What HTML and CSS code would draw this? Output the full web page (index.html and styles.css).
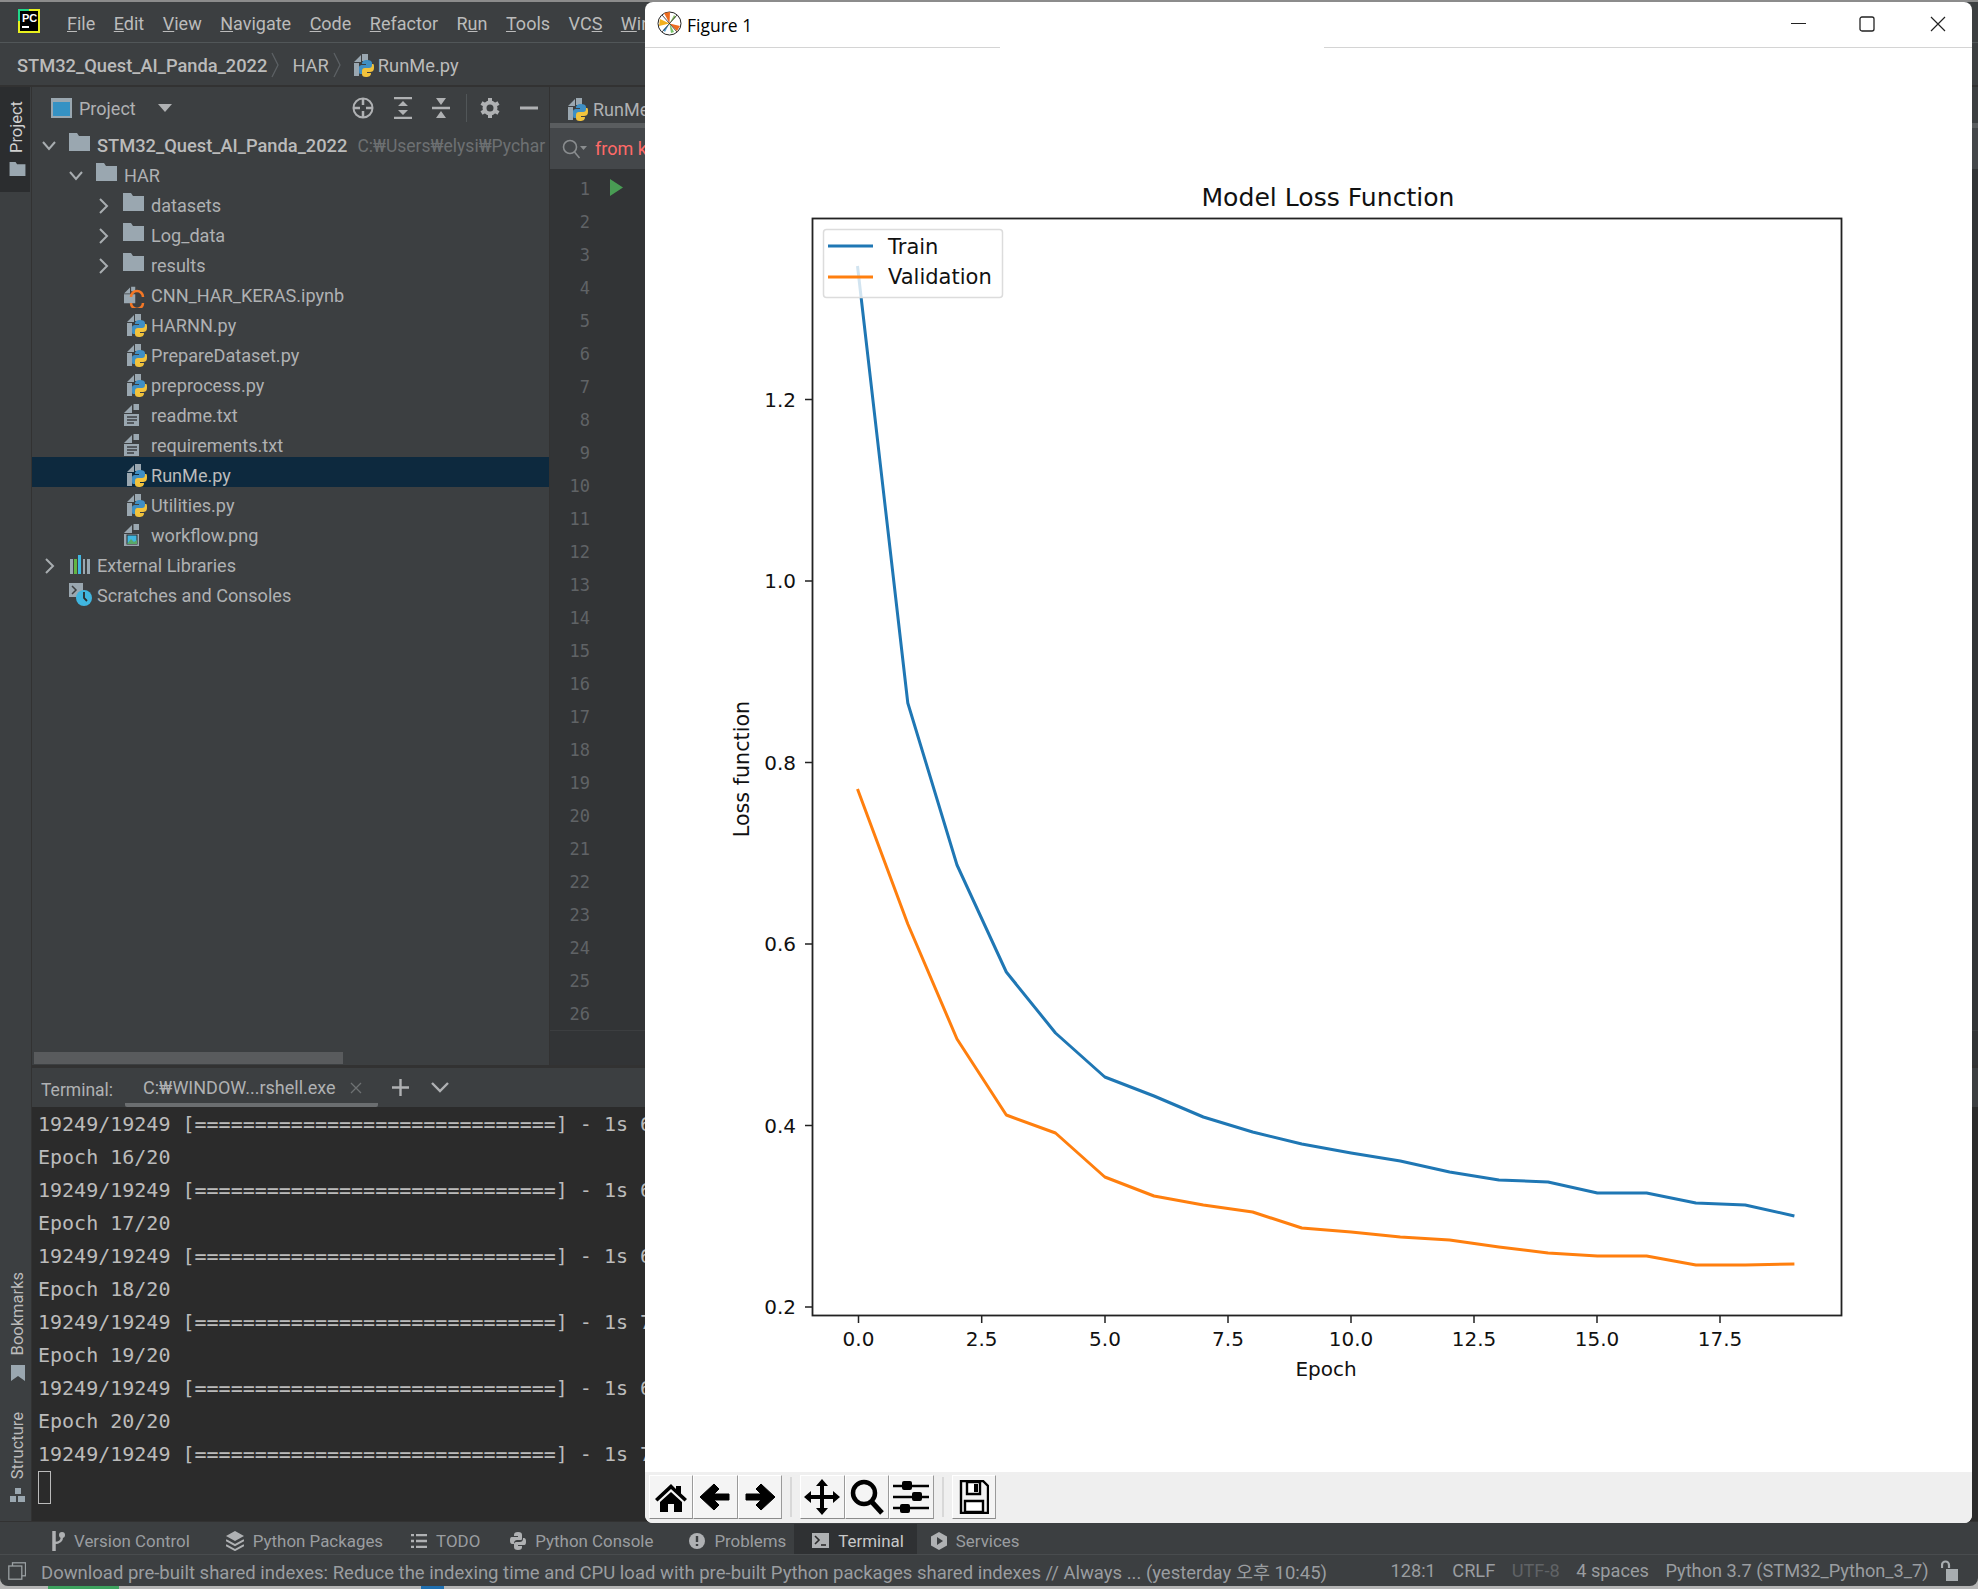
FILE: index.html
```html
<!DOCTYPE html>
<html lang="en">

<head>
  <meta charset="utf-8">
  <title>STM32_Quest_AI_Panda_2022 - RunMe.py</title>
  <link rel="stylesheet" href="styles.css">
</head>

<body>
  <svg class="defs">
    <defs>
      <symbol id="i-folder" viewBox="0 0 21 18">
        <path d="M0 0h8l2 3h11v15H0z" fill="#9aa7b0" />
      </symbol>
      <symbol id="i-file" viewBox="0 0 16 24">
        <path d="M0 10 8 2v8zM9.500 1H15v6H9.500z" fill="#9aa7b0" />
        <path d="M0 11h15v12H0z" fill="#9aa7b0" />
      </symbol>
      <symbol id="i-py" viewBox="0 0 21 25">
        <path d="M0 9 7 2v7zM8 1h6v7H8zM0 10h5v13H0z" fill="#9aa7b0" />
        <path d="M5 15c0-3 2-3 4-3h3v-1H8c0-3 2-4 5-4s5 1 5 3v4c0 2-2 3-3 3h-4c-2 0-3 1-3 3v1H6c-1 0-1-3-1-6z"
          fill="#3f8fc4" />
        <path d="M20 15c0 3-2 4-4 4h-3v1h4c0 3-2 4-5 4s-4-1-4-3v-3c0-2 1-3 3-3h4c2 0 3-1 3-3v-1h1c1 0 1 2 1 4z"
          fill="#f2c33c" />
      </symbol>
      <symbol id="i-right" viewBox="0 0 14 18">
        <path d="M4 2l7 7-7 7" fill="none" stroke="#a8adb0" stroke-width="2" />
      </symbol>
      <symbol id="i-down" viewBox="0 0 14 18">
        <path d="M1 5l6 7 6-7" fill="none" stroke="#a8adb0" stroke-width="2" />
      </symbol>
    </defs>
  </svg>

  <div class="ide">
    <!-- menu -->
    <header class="menubar">
      <svg class="pc-logo" width="22" height="24" viewBox="0 0 22 24">
        <rect width="22" height="24" fill="#e9f01e" />
        <rect x="0" y="0" width="11" height="12" fill="#21d789" />
        <rect x="2" y="2" width="18" height="20" fill="#000" />
        <rect x="4" y="17" width="7" height="2" fill="#fff" />
        <text x="4" y="13" class="pc-text">PC</text>
      </svg>
      <nav class="menu">
        <span><u>F</u>ile</span>
        <span><u>E</u>dit</span>
        <span><u>V</u>iew</span>
        <span><u>N</u>avigate</span>
        <span><u>C</u>ode</span>
        <span><u>R</u>efactor</span>
        <span>R<u>u</u>n</span>
        <span><u>T</u>ools</span>
        <span>VC<u>S</u></span>
        <span><u>W</u>indow</span>
      </nav>
    </header>

    <div class="crumbs">
      <b>STM32_Quest_AI_Panda_2022</b>
      <svg class="sep" width="9" height="26" viewBox="0 0 9 26">
        <path d="M1 1l6 12-6 12" fill="none" stroke="#5c6164" stroke-width="1.300" />
      </svg>
      <span>HAR</span>
      <svg class="sep" width="9" height="26" viewBox="0 0 9 26">
        <path d="M1 1l6 12-6 12" fill="none" stroke="#5c6164" stroke-width="1.300" />
      </svg>
      <svg class="crumb-icon" width="21" height="25">
        <use href="#i-py" />
      </svg>
      <span>RunMe.py</span>
    </div>

    <div class="workspace">
      <!-- left strip -->
      <aside class="strip">
        <div class="strip-btn active">
          <span class="vtext">Project</span>
          <svg width="17" height="14" viewBox="0 0 21 18">
            <use href="#i-folder" />
          </svg>
        </div>
        <div class="strip-btn bookmarks">
          <span class="vtext">Bookmarks</span>
          <svg width="14" height="16" viewBox="0 0 14 16">
            <path d="M0 0h14v16l-7-5-7 5z" fill="#9aa7b0" />
          </svg>
        </div>
        <div class="strip-btn structure">
          <span class="vtext">Structure</span>
          <svg width="15" height="14" viewBox="0 0 15 14">
            <path d="M5 0h6v6H5zM0 8h6v6H0zM8 8h7v6H8z" fill="#9aa7b0" />
          </svg>
        </div>
      </aside>

      <div class="center">
        <div class="upper">
          <!-- project tree -->
          <section class="project">
            <div class="project-bar">
              <svg class="pane-icon" width="21" height="20" viewBox="0 0 21 20">
                <rect x="1" y="1" width="19" height="18" fill="#3592c4" stroke="#9aa7b0" stroke-width="2" />
                <rect x="0" y="0" width="21" height="4" fill="#9aa7b0" />
              </svg>
              <span class="pane-title">Project</span>
              <svg class="caret" width="14" height="8" viewBox="0 0 14 8">
                <path d="M0 0h14L7 8z" fill="#afb1b3" />
              </svg>
              <svg class="tool first" width="22" height="22" viewBox="0 0 22 22">
                <circle cx="11" cy="11" r="9.500" fill="none" stroke="#afb1b3" stroke-width="2" />
                <path d="M11 1v7M11 14v7M1 11h7M14 11h7" stroke="#afb1b3" stroke-width="2.500" />
              </svg>
              <svg class="tool" width="18" height="22" viewBox="0 0 18 22">
                <path d="M0 1h18M0 21h18" stroke="#afb1b3" stroke-width="2.500" />
                <path d="M9 4l5 5H4zM9 18l5-5H4z" fill="#afb1b3" />
              </svg>
              <svg class="tool" width="18" height="22" viewBox="0 0 18 22">
                <path d="M0 11h18" stroke="#afb1b3" stroke-width="2.500" />
                <path d="M9 8L4 1h10zM9 14l5 7H4z" fill="#afb1b3" />
              </svg>
              <i class="tool-sep"></i>
              <svg class="tool" width="20" height="22" viewBox="0 0 20 22">
                <circle cx="10" cy="11" r="5.500" fill="none" stroke="#afb1b3" stroke-width="4" />
                <path d="M10 1v4M10 17v4M1.500 6l3.500 2M15 14l3.500 2M1.500 16L5 14M15 8l3.500-2" stroke="#afb1b3"
                  stroke-width="4" />
              </svg>
              <svg class="tool" width="18" height="22" viewBox="0 0 18 22">
                <path d="M0 11h18" stroke="#afb1b3" stroke-width="3" />
              </svg>
            </div>

            <div class="tree">
              <div class="row d0">
                <svg class="chev"><use href="#i-down" /></svg>
                <svg class="ico"><use href="#i-folder" width="21" height="18" /></svg>
                <b>STM32_Quest_AI_Panda_2022</b>
                <span class="path">C:₩Users₩elysi₩Pychar</span>
              </div>
              <div class="row d1">
                <svg class="chev"><use href="#i-down" /></svg>
                <svg class="ico"><use href="#i-folder" width="21" height="18" /></svg>
                <span>HAR</span>
              </div>
              <div class="row d2">
                <svg class="chev"><use href="#i-right" /></svg>
                <svg class="ico"><use href="#i-folder" width="21" height="18" /></svg>
                <span>datasets</span>
              </div>
              <div class="row d2">
                <svg class="chev"><use href="#i-right" /></svg>
                <svg class="ico"><use href="#i-folder" width="21" height="18" /></svg>
                <span>Log_data</span>
              </div>
              <div class="row d2">
                <svg class="chev"><use href="#i-right" /></svg>
                <svg class="ico"><use href="#i-folder" width="21" height="18" /></svg>
                <span>results</span>
              </div>
              <div class="row d2">
                <i class="chev"></i>
                <svg class="ico file" viewBox="0 0 21 25" preserveAspectRatio="xMinYMid">
                  <use href="#i-file" width="12" height="24" />
                  <path d="M7 14a6 6 0 0 1 12 0M7 20a6 6 0 0 0 12 0" fill="none" stroke="#f37726" stroke-width="2.500" />
                </svg>
                <span>CNN_HAR_KERAS.ipynb</span>
              </div>
              <div class="row d2">
                <i class="chev"></i>
                <svg class="ico file"><use href="#i-py" /></svg>
                <span>HARNN.py</span>
              </div>
              <div class="row d2">
                <i class="chev"></i>
                <svg class="ico file"><use href="#i-py" /></svg>
                <span>PrepareDataset.py</span>
              </div>
              <div class="row d2">
                <i class="chev"></i>
                <svg class="ico file"><use href="#i-py" /></svg>
                <span>preprocess.py</span>
              </div>
              <div class="row d2">
                <i class="chev"></i>
                <svg class="ico file" viewBox="0 0 21 25" preserveAspectRatio="xMinYMid">
                  <use href="#i-file" width="16" height="24" />
                  <path d="M3 14h10M3 17h10M3 20h7" stroke="#3c3f41" stroke-width="1.300" />
                </svg>
                <span>readme.txt</span>
              </div>
              <div class="row d2">
                <i class="chev"></i>
                <svg class="ico file" viewBox="0 0 21 25" preserveAspectRatio="xMinYMid">
                  <use href="#i-file" width="16" height="24" />
                  <path d="M3 14h10M3 17h10M3 20h7" stroke="#3c3f41" stroke-width="1.300" />
                </svg>
                <span>requirements.txt</span>
              </div>
              <div class="row d2 selected">
                <i class="chev"></i>
                <svg class="ico file"><use href="#i-py" /></svg>
                <span>RunMe.py</span>
              </div>
              <div class="row d2">
                <i class="chev"></i>
                <svg class="ico file"><use href="#i-py" /></svg>
                <span>Utilities.py</span>
              </div>
              <div class="row d2">
                <i class="chev"></i>
                <svg class="ico file" viewBox="0 0 21 25" preserveAspectRatio="xMinYMid">
                  <use href="#i-file" width="16" height="24" />
                  <rect x="3" y="12" width="10" height="9" fill="#40b6e0" stroke="#2b2b2b" />
                  <path d="M3 21l4-5 3 3 3-2v4z" fill="#59a869" />
                </svg>
                <span>workflow.png</span>
              </div>
              <div class="row d0">
                <svg class="chev"><use href="#i-right" /></svg>
                <svg class="ico lib" viewBox="0 0 21 25" preserveAspectRatio="xMinYMid">
                  <path d="M1 6h3v15H1zM14 6h2v15h-2zM18 6h3v15h-3z" fill="#9aa7b0" />
                  <path d="M5 6h3v15H5z" fill="#62b543" />
                  <path d="M9 2h3v19H9z" fill="#40b6e0" />
                </svg>
                <span>External Libraries</span>
              </div>
              <div class="row d0">
                <i class="chev"></i>
                <svg class="ico" viewBox="0 0 23 25" preserveAspectRatio="xMinYMid">
                  <path d="M0 0h14v14H0z" fill="#9aa7b0" />
                  <path d="M3 3l4 4-4 4" fill="none" stroke="#3c3f41" stroke-width="1.500" />
                  <circle cx="15" cy="15" r="8" fill="#40b6e0" />
                  <path d="M15 9v6l3 3" fill="none" stroke="#2b2b2b" stroke-width="1.800" />
                </svg>
                <span>Scratches and Consoles</span>
              </div>
            </div>

            <div class="hscroll"><i></i></div>
          </section>

          <!-- editor, mostly behind the figure -->
          <section class="editor">
            <div class="editor-tab">
              <svg width="21" height="25"><use href="#i-py" /></svg>
              <span>RunMe.py</span>
            </div>
            <div class="find">
              <svg width="26" height="22" viewBox="0 0 26 22">
                <circle cx="9" cy="9" r="6.500" fill="none" stroke="#8a8d8f" stroke-width="1.600" />
                <path d="M13.500 14l5 6" stroke="#8a8d8f" stroke-width="1.600" />
                <path d="M19 8h7l-3.500 4z" fill="#8a8d8f" />
              </svg>
              <span>from keras</span>
            </div>
            <div class="gutter">
              <div class="lines">
                <div class="ln">1
                  <svg class="run" width="13" height="17" viewBox="0 0 13 17">
                    <path d="M0 0l13 8.500L0 17z" fill="#499c54" />
                  </svg>
                </div>
                <div class="ln">2</div>
                <div class="ln">3</div>
                <div class="ln">4</div>
                <div class="ln">5</div>
                <div class="ln">6</div>
                <div class="ln">7</div>
                <div class="ln">8</div>
                <div class="ln">9</div>
                <div class="ln">10</div>
                <div class="ln">11</div>
                <div class="ln">12</div>
                <div class="ln">13</div>
                <div class="ln">14</div>
                <div class="ln">15</div>
                <div class="ln">16</div>
                <div class="ln">17</div>
                <div class="ln">18</div>
                <div class="ln">19</div>
                <div class="ln">20</div>
                <div class="ln">21</div>
                <div class="ln">22</div>
                <div class="ln">23</div>
                <div class="ln">24</div>
                <div class="ln">25</div>
                <div class="ln">26</div>
              </div>
            </div>
          </section>
        </div>

        <!-- terminal -->
        <section class="terminal">
          <div class="term-head">
            <span class="term-label">Terminal:</span>
            <div class="term-tab">
              <span>C:₩WINDOW...rshell.exe</span>
              <svg width="12" height="12" viewBox="0 0 12 12">
                <path d="M1 1l10 10M11 1L1 11" stroke="#6e7173" stroke-width="1.300" />
              </svg>
            </div>
            <svg class="term-add" width="17" height="17" viewBox="0 0 17 17">
              <path d="M8.500 0v17M0 8.500h17" stroke="#afb1b3" stroke-width="2.400" />
            </svg>
            <svg class="term-more" width="18" height="11" viewBox="0 0 18 11">
              <path d="M1 1l8 8 8-8" fill="none" stroke="#afb1b3" stroke-width="2.400" />
            </svg>
          </div>
          <div class="term-body">
            <div>19249/19249 [==============================] - 1s 66us/step</div>
            <div>Epoch 16/20</div>
            <div>19249/19249 [==============================] - 1s 66us/step</div>
            <div>Epoch 17/20</div>
            <div>19249/19249 [==============================] - 1s 66us/step</div>
            <div>Epoch 18/20</div>
            <div>19249/19249 [==============================] - 1s 71us/step</div>
            <div>Epoch 19/20</div>
            <div>19249/19249 [==============================] - 1s 66us/step</div>
            <div>Epoch 20/20</div>
            <div>19249/19249 [==============================] - 1s 71us/step</div>
            <i class="cursor"></i>
          </div>
        </section>
      </div>
    </div>

    <!-- bottom tool tabs -->
    <footer class="toolbar">
      <span class="tw vc">
        <svg width="14" height="20" viewBox="0 0 14 20">
          <path d="M3 0v20" stroke="#afb1b3" stroke-width="3.500" />
          <path d="M3 12c6 0 8-2 8-7" fill="none" stroke="#afb1b3" stroke-width="2.500" />
          <circle cx="11" cy="4" r="3" fill="#afb1b3" />
        </svg>
        Version Control
      </span>
      <span class="tw packages">
        <svg width="18" height="20" viewBox="0 0 18 20">
          <path d="M9 0l9 5-9 5-9-5z" fill="#afb1b3" />
          <path d="M0 9l9 5 9-5M0 14l9 5 9-5" fill="none" stroke="#afb1b3" stroke-width="2" />
        </svg>
        Python Packages
      </span>
      <span class="tw todo">
        <svg width="16" height="14" viewBox="0 0 16 14">
          <path d="M0 1h3M5 1h11M0 7h3M5 7h11M0 13h3M5 13h11" stroke="#afb1b3" stroke-width="2.400" />
        </svg>
        TODO
      </span>
      <span class="tw">
        <svg width="16" height="18" viewBox="0 0 16 18">
          <path d="M8 0c-3 0-4 1-4 3v1h4v1H2C0 5 0 7 0 9s1 3 2 3h2c0-3 1-4 4-4h3c1 0 1-1 1-2V3c0-2-1-3-4-3z"
            fill="#afb1b3" />
          <path d="M8 18c3 0 4-1 4-3v-1H8v-1h6c2 0 2-2 2-4s-1-3-2-3h-1c0 3-1 4-4 4H6c-1 0-2 1-2 2v3c0 2 1 3 4 3z"
            fill="#afb1b3" />
        </svg>
        Python Console
      </span>
      <span class="tw problems">
        <svg width="16" height="16" viewBox="0 0 16 16">
          <circle cx="8" cy="8" r="8" fill="#afb1b3" />
          <path d="M8 3v6M8 11v2" stroke="#3c3f41" stroke-width="2.400" />
        </svg>
        Problems
      </span>
      <span class="tw active">
        <svg width="17" height="15" viewBox="0 0 17 15">
          <rect width="17" height="15" fill="#afb1b3" />
          <path d="M3 3l4 4-4 4" fill="none" stroke="#2b2b2b" stroke-width="1.600" />
          <path d="M9 12h5" stroke="#2b2b2b" stroke-width="1.600" />
        </svg>
        Terminal
      </span>
      <span class="tw last">
        <svg width="16" height="18" viewBox="0 0 16 18">
          <path d="M8 0l8 4.500v9L8 18l-8-4.500v-9z" fill="#afb1b3" />
          <path d="M6 5l6 4-6 4z" fill="#3c3f41" />
        </svg>
        Services
      </span>
    </footer>

    <div class="statusbar">
      <svg class="status-icon" width="18" height="18" viewBox="0 0 18 18">
        <rect x="4.500" y="0.800" width="13" height="13" fill="none" stroke="#9aa0a3" stroke-width="1.300" />
        <rect x="0.800" y="4" width="13" height="13.200" fill="#3c3f41" stroke="#9aa0a3" stroke-width="1.300" />
      </svg>
      <span class="status-msg">Download pre-built shared indexes: Reduce the indexing time and CPU load with pre-built Python packages shared indexes // Always ... (yesterday 오후 10:45)</span>
      <span>128:1</span>
      <span>CRLF</span>
      <span class="dim">UTF-8</span>
      <span>4 spaces</span>
      <span>Python 3.7 (STM32_Python_3_7)</span>
      <svg class="lock" width="17" height="21" viewBox="0 0 17 21">
        <path d="M1 8V5a3.500 3.500 0 0 1 7 0v3" fill="none" stroke="#a8adb0" stroke-width="2.200" />
        <rect x="5" y="9" width="12" height="12" fill="#a8adb0" />
      </svg>
    </div>
    <div class="under">
      <i class="under-a"></i>
      <i class="under-b"></i>
    </div>
  </div>

  <!-- matplotlib window, floating over the IDE -->
  <div class="figure">
    <div class="fig-title">
      <svg class="fig-logo" width="25" height="25" viewBox="0 0 25 25">
        <circle cx="12.500" cy="12.500" r="11.500" fill="#fff" stroke="#222" stroke-width="1" />
        <path d="M12.500 12.500L7 2l6-1z" fill="#ee6c1f" />
        <path d="M12.500 12.500L3 8l-1 7z" fill="#f2b01e" />
        <path d="M12.500 12.500L20 20l3-5z" fill="#ee6c1f" />
        <path d="M12.500 12.500L14 22l3-1z" fill="#79c36a" />
        <path d="M12.500 12.500L19 6l-2-2z" fill="#8fc36a" />
        <path d="M12.500 12.500L6 19l2 2z" fill="#4c9bd0" />
        <path d="M5 4l15 17M20 4L5 21" stroke="#222" stroke-width="0.800" />
      </svg>
      <span class="fig-name">Figure 1</span>
      <svg class="win-btn min" width="16" height="16" viewBox="0 0 16 16">
        <path d="M0 7.500h15" stroke="#222" stroke-width="1.200" />
      </svg>
      <svg class="win-btn max" width="16" height="16" viewBox="0 0 16 16">
        <rect x="1" y="1" width="14" height="14" rx="2" fill="none" stroke="#222" stroke-width="1.300" />
      </svg>
      <svg class="win-btn" width="16" height="16" viewBox="0 0 16 16">
        <path d="M1 1l14 14M15 1L1 15" stroke="#222" stroke-width="1.200" />
      </svg>
    </div>
    <div class="fig-rule"><i></i></div>

    <svg class="plot" width="1327" height="1424" viewBox="645 48 1327 1424">
      <text x="1328" y="206" class="t-title" text-anchor="middle">Model Loss Function</text>

      <polyline class="train" points="857.500,266 907.800,703 957,865 1006.300,972 1055.500,1033 1104.800,1077 1154,1096 1203.300,1117 1252.600,1132 1301.800,1144 1351.100,1153 1400.300,1161 1449.600,1172 1498.900,1180 1548.100,1182 1597.400,1193 1646.600,1193 1695.900,1203 1745.200,1205 1794.400,1216" />
      <polyline class="val" points="857.500,789 907.800,924 957,1039 1006.300,1115 1055.500,1133 1104.800,1177 1154,1196 1203.300,1205 1252.600,1212 1301.800,1228 1351.100,1232 1400.300,1237 1449.600,1240 1498.900,1247 1548.100,1253 1597.400,1256 1646.600,1256 1695.900,1265 1745.200,1265 1794.400,1264" />

      <rect class="axes" x="812.500" y="218.500" width="1029" height="1097" />

      <path class="ticks" d="M858.500 1316v7M981.700 1316v7M1105 1316v7M1228 1316v7M1351 1316v7M1474 1316v7M1597 1316v7M1720 1316v7M812 1307h-7M812 1125.500h-7M812 944h-7M812 762.500h-7M812 581h-7M812 399.500h-7" />

      <g class="t-tick" text-anchor="middle">
        <text x="858.500" y="1346">0.0</text>
        <text x="981.700" y="1346">2.5</text>
        <text x="1105" y="1346">5.0</text>
        <text x="1228" y="1346">7.5</text>
        <text x="1351" y="1346">10.0</text>
        <text x="1474" y="1346">12.5</text>
        <text x="1597" y="1346">15.0</text>
        <text x="1720" y="1346">17.5</text>
      </g>
      <g class="t-tick" text-anchor="end">
        <text x="796" y="1314">0.2</text>
        <text x="796" y="1133">0.4</text>
        <text x="796" y="951">0.6</text>
        <text x="796" y="770">0.8</text>
        <text x="796" y="588">1.0</text>
        <text x="796" y="407">1.2</text>
      </g>
      <text class="t-tick" x="1326" y="1376" text-anchor="middle">Epoch</text>
      <text class="t-label" x="749" y="769" text-anchor="middle" transform="rotate(-90 749 769)">Loss function</text>

      <rect class="legend" x="823.500" y="229.500" width="179" height="68" rx="3" />
      <path class="train" d="M828 246h45" />
      <path class="val" d="M828 277h45" />
      <text class="t-legend" x="888" y="254">Train</text>
      <text class="t-legend" x="888" y="284">Validation</text>
    </svg>

    <div class="fig-tools">
      <button class="nav-btn">
        <svg width="34" height="30" viewBox="0 0 34 30">
          <path d="M17 2L1 17l2.500 2.500L17 7l13.500 12.500L33 17l-6-5.500V4h-5v3z" fill="#000" />
          <path d="M6 20L17 10l11 10v10h-8v-8h-6v8H6z" fill="#000" />
        </svg>
      </button>
      <button class="nav-btn">
        <svg width="32" height="30" viewBox="0 0 32 30">
          <path d="M15 2l5 5-5 5h15v6H15l5 5-5 5L1 15z" fill="#000" stroke="#000" stroke-linejoin="round" />
        </svg>
      </button>
      <button class="nav-btn">
        <svg width="32" height="30" viewBox="0 0 32 30">
          <path d="M17 2l-5 5 5 5H2v6h15l-5 5 5 5 14-13z" fill="#000" stroke="#000" stroke-linejoin="round" />
        </svg>
      </button>
      <i class="nav-sep"></i>
      <button class="nav-btn">
        <svg width="36" height="36" viewBox="0 0 36 36">
          <path d="M18 0l6 7h-4v9h9v-4l7 6-7 6v-4h-9v9h4l-6 7-6-7h4v-9H7v4l-7-6 7-6v4h9V7h-4z" fill="#000" />
        </svg>
      </button>
      <button class="nav-btn">
        <svg width="34" height="36" viewBox="0 0 34 36">
          <circle cx="14" cy="14" r="11" fill="none" stroke="#000" stroke-width="4.500" />
          <path d="M21 22l11 12" stroke="#000" stroke-width="5" />
        </svg>
      </button>
      <button class="nav-btn">
        <svg width="36" height="34" viewBox="0 0 36 34">
          <path d="M0 6h36M0 17h36M0 28h36" stroke="#000" stroke-width="2.500" />
          <rect x="9" y="1" width="10" height="9" rx="2" fill="#000" />
          <rect x="19" y="12" width="10" height="9" rx="2" fill="#000" />
          <rect x="7" y="24" width="10" height="9" rx="2" fill="#000" />
        </svg>
      </button>
      <i class="nav-sep"></i>
      <button class="nav-btn">
        <svg width="30" height="34" viewBox="0 0 30 34">
          <path d="M2 1h22l5 5v27H2z" fill="none" stroke="#000" stroke-width="2.400" />
          <path d="M8 2v12h13V2zM6 21h18v11H6z" fill="#fff" stroke="#000" stroke-width="2.400" />
          <path d="M15 4h4v8h-4z" fill="#000" />
        </svg>
      </button>
    </div>
  </div>
</body>

</html>
```

FILE: styles.css
```css
* {
  box-sizing: border-box;
}

html,
body {
  margin: 0;
  padding: 0;
  height: 100%;
  overflow: hidden;
  background: #fff;
}

body {
  width: 1980px;
  height: 1589px;
  position: relative;
  font-family: Roboto, "Noto Sans CJK KR", sans-serif;
  font-size: 18px;
  color: #afb1b3;
}

.defs {
  position: absolute;
  width: 0;
  height: 0;
}

svg {
  display: block;
  flex: none;
}

.ide {
  width: 1978px;
  height: 1589px;
  display: flex;
  flex-direction: column;
  background: #b5b5b5;
  border-top: 2px solid #8c8c8c;
}

/* menu and breadcrumb */
.menubar {
  height: 41px;
  flex: none;
  display: flex;
  align-items: center;
  padding-left: 18px;
  background: #3c3f41;
  border-bottom: 1px solid #515658;
}

.pc-logo {
  margin-top: -3px;
}

.pc-text {
  font: bold 11px "Liberation Sans", sans-serif;
  fill: #fff;
}

.menu {
  display: flex;
  gap: 18.500px;
  margin-left: 27px;
  padding-top: 2px;
  color: #bbbbbb;
  font-size: 18px;
  white-space: nowrap;
}

.crumbs {
  height: 44px;
  flex: none;
  display: flex;
  align-items: center;
  padding: 2px 0 0 17px;
  background: #3c3f41;
  color: #bbbbbb;
  font-size: 18.300px;
  border-bottom: 2px solid #323232;
}

.crumbs .sep {
  margin: 0 12px 0 4px;
}

.crumbs .crumb-icon {
  margin: 0 3px 0 0;
}

.crumbs b {
  font-weight: 500;
}

.workspace {
  flex: 1;
  min-height: 0;
  display: flex;
  background: #3c3f41;
}

/* left strip */
.strip {
  width: 32px;
  flex: none;
  display: flex;
  flex-direction: column;
  border-right: 1px solid #323232;
}

.strip-btn {
  display: flex;
  flex-direction: column;
  align-items: center;
  gap: 9px;
  padding: 14px 0 16px 4px;
  color: #bbbbbb;
  font-size: 16.500px;
}

.strip-btn.active {
  background: #2b2d2f;
  width: 30px;
  color: #d0d0d0;
}

.strip-btn.bookmarks {
  margin-top: auto;
  padding-bottom: 17px;
}

.strip-btn.structure {
  padding-bottom: 19px;
}

.vtext {
  writing-mode: vertical-rl;
  transform: rotate(180deg);
  line-height: 18px;
}

.center {
  flex: 1;
  min-width: 0;
  display: flex;
  flex-direction: column;
}

.upper {
  height: 978px;
  flex: none;
  display: flex;
}

/* project tree */
.project {
  width: 517px;
  flex: none;
  display: flex;
  flex-direction: column;
}

.project-bar {
  height: 40px;
  flex: none;
  display: flex;
  align-items: center;
  padding: 2px 0 0 19px;
}

.pane-title {
  margin-left: 7px;
}

.caret {
  margin-left: 22px;
}

.tool {
  margin-left: 20px;
}

.tool.first {
  margin-left: 180.500px;
}

.tool-sep {
  width: 1px;
  height: 28px;
  margin: 0 -7px 0 16px;
  background: #515658;
}

.tree {
  flex: 1;
  min-height: 0;
  overflow: hidden;
  font-size: 18.100px;
}

.row {
  height: 30px;
  display: flex;
  align-items: center;
  padding-top: 7px;
  white-space: nowrap;
}

.row.d0 {
  padding-left: 10px;
}

.row.d1 {
  padding-left: 37px;
}

.row.d2 {
  padding-left: 64px;
}

.row.selected {
  background: #0d293e;
  color: #bbbbbb;
}

.row b {
  font-weight: 500;
  font-size: 18.300px;
  color: #bbbbbb;
}

.chev {
  width: 14px;
  height: 18px;
  margin-right: 13px;
  flex: none;
  display: block;
}

.ico {
  width: 28px;
  height: 25px;
  flex: none;
}

.ico.file {
  margin-left: 1px;
  width: 27px;
  height: 25px;
}

.path {
  margin-left: 10px;
  font-size: 17.500px;
  color: #6d7072;
}

.hscroll {
  height: 14px;
  flex: none;
  padding: 1px 0 0 2px;
}

.hscroll i {
  display: block;
  width: 309px;
  height: 12px;
  background: #595b5d;
}

/* editor */
.editor {
  flex: 1;
  min-width: 0;
  overflow: hidden;
  display: flex;
  flex-direction: column;
  border-left: 1px solid #323232;
}

.editor-tab {
  height: 41px;
  flex: none;
  display: flex;
  align-items: center;
  gap: 4px;
  padding: 8px 0 0 18px;
  white-space: nowrap;
  border-bottom: 5px solid #5a5d5f;
}

.find {
  height: 41px;
  flex: none;
  display: flex;
  align-items: center;
  gap: 8px;
  padding-left: 11px;
  color: #ff6a68;
  background: #44474a;
  white-space: nowrap;
}

.gutter {
  flex: 1;
  min-height: 0;
  overflow: hidden;
  background: #323436;
  font: 17px "DejaVu Sans Mono", monospace;
  color: #606366;
  padding-top: 3px;
}

.lines {
  border-bottom: 1px solid #3c3e40;
}

.ln {
  height: 33px;
  width: 40px;
  display: flex;
  align-items: center;
  justify-content: flex-end;
  position: relative;
}

.run {
  position: absolute;
  left: 60px;
  top: 7px;
}

/* terminal */
.terminal {
  flex: 1;
  min-height: 0;
  display: flex;
  flex-direction: column;
  border-top: 3px solid #323232;
}

.term-head {
  height: 39px;
  flex: none;
  display: flex;
  align-items: center;
  padding-left: 9px;
  white-space: nowrap;
}

.term-label {
  width: 84px;
  padding-top: 4px;
  font-size: 17.500px;
}

.term-tab {
  height: 39px;
  width: 253px;
  flex: none;
  display: flex;
  align-items: center;
  gap: 14px;
  padding: 4px 0 0 18px;
  border-bottom: 4px solid #6b6e70;
  border-radius: 0 0 2px 2px;
}

.term-add {
  margin-left: 14px;
}

.term-more {
  margin-left: 22px;
}

.term-body {
  flex: 1;
  min-height: 0;
  overflow: hidden;
  background: #2b2b2b;
  padding: 1px 0 0 6px;
  font: 20px/33px "DejaVu Sans Mono", monospace;
  color: #bbbbbb;
  white-space: nowrap;
}

.cursor {
  display: block;
  width: 13px;
  height: 33px;
  border: 1px solid #bbbbbb;
}

/* bottom tool tabs */
.toolbar {
  height: 34px;
  flex: none;
  display: flex;
  align-items: stretch;
  padding-left: 33px;
  background: #3c3f41;
  font-size: 16.900px;
  color: #9a9da0;
  border-top: 1px solid #323232;
  border-bottom: 1px solid #494c4e;
}

.tw {
  display: flex;
  align-items: center;
  gap: 9px;
  padding: 3px 18px 0;
  margin-top: 2px;
  white-space: nowrap;
}

.tw.packages {
  padding-right: 10px;
}

.tw.todo {
  padding-right: 12px;
}

.tw.problems {
  padding-right: 8px;
}

.tw.active {
  background: #2f3133;
  color: #c8c8c8;
  padding: 3px 13px 0 18px;
}

.tw.last {
  padding-left: 14px;
}

/* status bar */
.statusbar {
  height: 31px;
  flex: none;
  display: flex;
  align-items: center;
  gap: 16.500px;
  padding: 0 20px 0 8px;
  background: #3c3f41;
  border-radius: 0 0 8px 8px;
  color: #9a9da0;
  font-size: 18.200px;
  white-space: nowrap;
}

.status-msg {
  margin: 0 auto 0 -1.500px;
  font-size: 18.500px;
}

.lock {
  margin-left: -4px;
}

.dim {
  color: #606366;
}

.under {
  height: 3px;
  flex: none;
  display: flex;
  padding-left: 48px;
}

.under-a {
  width: 71px;
  background: #3ea35f;
}

.under-b {
  width: 23px;
  margin-left: 302px;
  background: #1f6fb0;
}

/* figure window */
.figure {
  position: absolute;
  left: 645px;
  top: 2px;
  width: 1327px;
  height: 1521px;
  display: flex;
  flex-direction: column;
  background: #fff;
  border-radius: 8px;
  overflow: hidden;
  font-family: "Open Sans", sans-serif;
  color: #000;
}

.fig-title {
  height: 45px;
  flex: none;
  display: flex;
  align-items: center;
  padding: 0 26px 2px 12px;
  font-size: 17.500px;
}

.fig-logo {
  margin-right: 5px;
}

.fig-name {
  margin-top: 3px;
}

.win-btn {
  margin-left: 55px;
}

.win-btn.min {
  margin-left: auto;
}

.win-btn.max {
  margin-left: 52.500px;
}

.fig-rule {
  height: 1px;
  flex: none;
  background: #d4d4d4;
}

.fig-rule i {
  display: block;
  width: 324px;
  height: 1px;
  margin-left: 355px;
  background: #fff;
}

.plot {
  flex: none;
}

.plot polyline,
.plot path.train,
.plot path.val {
  fill: none;
  stroke-width: 3px;
  stroke-linejoin: round;
}

.train {
  stroke: #1f77b4;
}

.val {
  stroke: #ff7f0e;
}

.axes {
  fill: none;
  stroke: #222;
  stroke-width: 1.800px;
}

.ticks {
  stroke: #222;
  stroke-width: 1.500px;
  fill: none;
}

.legend {
  fill: #fff;
  fill-opacity: 0.8;
  stroke: #dcdcdc;
  stroke-width: 1.500px;
}

.t-title {
  font: 25.100px "DejaVu Sans", sans-serif;
  fill: #111;
}

.t-tick {
  font: 20px "DejaVu Sans", sans-serif;
  fill: #111;
}

.t-label {
  font: 20.700px "DejaVu Sans", sans-serif;
  fill: #111;
}

.t-legend {
  font: 21px "DejaVu Sans", sans-serif;
  fill: #111;
}

/* matplotlib toolbar */
.fig-tools {
  height: 51px;
  flex: none;
  display: flex;
  align-items: center;
  padding: 0 0 1px 3.500px;
  background: #efefef;
}

.nav-btn {
  width: 44.500px;
  height: 44px;
  padding: 0;
  display: flex;
  align-items: center;
  justify-content: center;
  background: #f4f4f4;
  border: 1px solid;
  border-color: #fff #9a9a9a #8a8a8a #fff;
}

.nav-sep {
  width: 2px;
  height: 40px;
  margin: 0 8px;
  background: #d8d8d8;
}
```
